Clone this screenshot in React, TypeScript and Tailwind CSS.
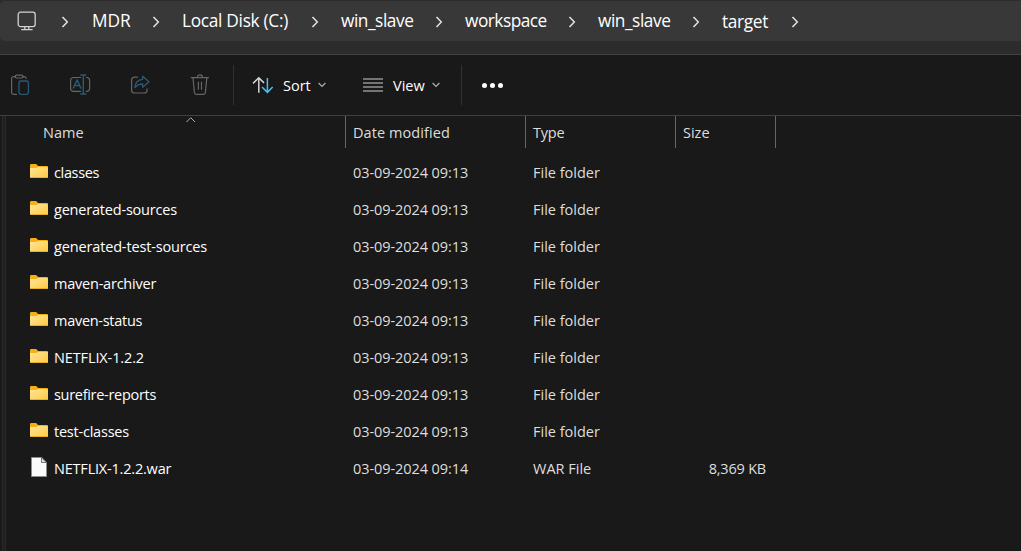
import type { ReactNode } from "react";

const crumbs = [
  { name: "MDR", cls: "w-[90px]" },
  { name: "Local Disk (C:)", cls: "w-[159px] tracking-[-0.3px]" },
  { name: "win_slave", cls: "w-[124px] tracking-[-0.45px]" },
  { name: "workspace", cls: "w-[133px] tracking-[-0.5px]" },
  { name: "win_slave", cls: "w-[124px] tracking-[-0.45px]" },
  { name: "target", cls: "w-[98px] tracking-[-0.35px] pt-px" },
];

const files = [
  { name: "classes", cls: "tracking-[-0.35px]" },
  { name: "generated-sources", cls: "tracking-[-0.2px]" },
  { name: "generated-test-sources", cls: "tracking-[-0.15px]" },
  { name: "maven-archiver", cls: "tracking-[-0.22px]" },
  { name: "maven-status", cls: "tracking-[-0.28px]" },
  { name: "NETFLIX-1.2.2", cls: "tracking-[-0.12px]" },
  { name: "surefire-reports", cls: "tracking-[-0.3px]" },
  { name: "test-classes", cls: "tracking-[-0.22px]" },
  { name: "NETFLIX-1.2.2.war", cls: "tracking-[-0.2px]", file: true },
];

function Chevron() {
  return (
    <svg width="8" height="12" viewBox="0 0 8 12" className="mt-px shrink-0" fill="none" stroke="#e2e2e2" strokeWidth="1.5">
      <path d="M1.5 1l4.8 5-4.8 5" />
    </svg>
  );
}

function MonitorIcon() {
  return (
    <svg width="20" height="20" viewBox="0 0 20 20" className="shrink-0" fill="none" stroke="#d2d2d2" strokeWidth="1.3">
      <rect x="1.2" y="1.2" width="17" height="14.4" rx="2.4" />
      <path d="M7.8 15.6v2.8M11.8 15.6v2.8M4.2 18.6h11.4" />
    </svg>
  );
}

function ToolIcon({ children }: { children: ReactNode }) {
  return (
    <svg width="22" height="22" viewBox="0 0 22 22" className="shrink-0" fill="none" stroke="#666666" strokeWidth="1.2" strokeLinecap="round" strokeLinejoin="round">
      {children}
    </svg>
  );
}

function PasteIcon() {
  return (
    <ToolIcon>
      <path d="M6.5 20.4H3.6a2 2 0 0 1-2-2V4.6a2 2 0 0 1 2-2h1.6M13 2.6h1.2a2 2 0 0 1 1.9 2" />
      <rect x="5.2" y="1.2" width="7.8" height="2.8" rx="1.4" />
      <rect x="9" y="7" width="9.4" height="13.4" rx="1.8" stroke="#2b5a76" strokeWidth="1.3" />
    </ToolIcon>
  );
}

function RenameIcon() {
  return (
    <ToolIcon>
      <path d="M10.6 3.5H3.4A2.8 2.8 0 0 0 .6 6.3v8.2a2.8 2.8 0 0 0 2.8 2.8h7.2M16.2 3.5h.6a2.8 2.8 0 0 1 2.8 2.8v8.2a2.8 2.8 0 0 1-2.8 2.8h-.6" />
      <path d="M3.4 14.1l3.7-8.3 3.7 8.3M4.6 11.5h5M10.8 1h5M13.3 1v19M10.8 20h5" stroke="#2b5a76" strokeWidth="1.4" />
    </ToolIcon>
  );
}

function ShareIcon() {
  return (
    <ToolIcon>
      <path d="M7.4 3.2H4.4a2.8 2.8 0 0 0-2.8 2.8v10.2A2.8 2.8 0 0 0 4.4 19h9.8a2.8 2.8 0 0 0 2.8-2.8v-1.4" />
      <path d="M12.6 2.2l6.4 5.6-6.4 5.4V10c-3.5 0-5.7 1.1-7.7 3.6.3-4.4 2.6-7.8 7.7-8.3z" stroke="#2b5a76" strokeWidth="1.3" />
    </ToolIcon>
  );
}

function TrashIcon() {
  return (
    <ToolIcon>
      <path d="M1.3 3.6h17.2M7.3 3.4a2.6 2.6 0 0 1 5.2 0M3 3.9l1.4 14.6a1.9 1.9 0 0 0 1.9 1.8h7.2a1.9 1.9 0 0 0 1.9-1.8l1.4-14.6M8.4 8v7.2M11.5 8v7.2" />
    </ToolIcon>
  );
}

function Caret() {
  return (
    <svg width="8" height="6" viewBox="0 0 8 6" className="shrink-0" fill="none" stroke="#b0b0b0" strokeWidth="1.2">
      <path d="M.6 1l3.4 3.5L7.4 1" />
    </svg>
  );
}

function FolderIcon() {
  return (
    <svg width="18" height="14" viewBox="0 0 18 14" className="shrink-0">
      <defs>
        <linearGradient id="folder-front" x1="0" y1="0" x2="1" y2="1">
          <stop offset="0" stopColor="#ffe59c" />
          <stop offset="1" stopColor="#ffca3e" />
        </linearGradient>
      </defs>
      <path d="M0 1.2Q0 0 1.2 0H5.6Q6.3 0 6.8.6L8 2H17Q18 2 18 3V8H0z" fill="#f9ae12" />
      <path d="M0 4.1H6L8.2 3H17Q18 3 18 4V13Q18 14 17 14H1Q0 14 0 13z" fill="url(#folder-front)" />
      <path d="M.3 13.5h17.4" stroke="#e9ac26" strokeWidth=".9" />
    </svg>
  );
}

function FileIcon() {
  return (
    <svg width="16" height="20" viewBox="0 0 16 20" className="ml-px mr-px shrink-0">
      <path d="M.5.5h10.2l4.8 4.8v14.2H.5z" fill="#fafafa" stroke="#8c8c8c" />
      <path d="M10.5.5v5h5z" fill="#dedede" stroke="#777777" />
    </svg>
  );
}

export default function App() {
  return (
    <div className="flex h-[551px] w-[1021px] flex-col overflow-hidden bg-[#191919] font-['Open_Sans','Noto_Sans',sans-serif] text-[14.5px] text-white">
      <header className="h-[55px] shrink-0 border-b border-[#414141] bg-[#2c2c2c] pt-px">
        <nav className="flex h-10 items-center rounded-l-[5px] bg-[#383838] pl-[17px] text-[17.3px] leading-6">
          <MonitorIcon />
          <div className="ml-6 flex items-center">
            <Chevron />
          </div>
          <div className="ml-[23px] flex items-center">
            {crumbs.map((c, i) => (
              <div key={i} className={`flex items-center justify-between whitespace-nowrap ${c.cls}`}>
                <span>{c.name}</span>
                <span className={i < crumbs.length - 1 ? "mr-[22px]" : "mr-[21px]"}>
                  <Chevron />
                </span>
              </div>
            ))}
          </div>
        </nav>
      </header>

      <div className="flex h-[61px] shrink-0 items-center border-b border-[#414141] pl-[10px]">
        <div className="flex w-[223px] items-center gap-[38px]">
          <PasteIcon />
          <RenameIcon />
          <ShareIcon />
          <TrashIcon />
        </div>
        <div className="h-10 w-px bg-[#303030]" />
        <button className="ml-[18px] flex items-center">
          <svg width="22" height="18" viewBox="0 0 22 18" fill="none" strokeWidth="1.5">
            <path d="M6.8 16.8V1.8M1 7.4l5.8-5.7 5.2 5.2" stroke="#d5d5d5" />
            <path d="M15.4 2v14.5M10 11l5.4 5.4 5.3-5.4" stroke="#4cbcf4" />
          </svg>
          <span className="ml-[9px] w-[35px] pt-[2px] text-left">Sort</span>
          <Caret />
        </button>
        <button className="ml-[37px] flex items-center">
          <svg width="20" height="14" viewBox="0 0 20 14" stroke="#d0d0d0" strokeWidth="1.2">
            <path d="M0 1h20M0 5h20M0 9h20M0 13h20" />
          </svg>
          <span className="ml-[10px] w-[39px] pt-[2px] text-left">View</span>
          <Caret />
        </button>
        <div className="ml-[21px] h-10 w-px bg-[#303030]" />
        <div className="ml-[20px] flex gap-[3px]">
          <i className="size-[5px] rounded-full bg-white" />
          <i className="size-[5px] rounded-full bg-white" />
          <i className="size-[5px] rounded-full bg-white" />
        </div>
      </div>

      <div className="flex min-h-0 flex-1">
        <div className="ml-[2px] w-1 shrink-0 border-x border-[#292929] bg-[#202020]" />
        <main className="flex-1">
          <div className="flex h-8 items-center text-[#dedede]">
            <div className="flex h-8 w-[340px] border-r border-[#666666] pl-[37px]">
              <span className="w-[143px] pt-px leading-8">Name</span>
              <svg width="10" height="6" viewBox="0 0 10 6" className="mt-px" fill="none" stroke="#b0b0b0">
                <path d="M.5 5L4.7.7 9 5" />
              </svg>
            </div>
            <div className="h-8 w-[180px] border-r border-[#666666] pt-px pl-[7px] leading-8 tracking-[0.08px]">Date modified</div>
            <div className="h-8 w-[150px] border-r border-[#666666] pt-px pl-[7px] leading-8 tracking-[-0.2px]">Type</div>
            <div className="h-8 w-[100px] border-r border-[#666666] pt-px pl-[7px] leading-8">Size</div>
          </div>
          <div className="pt-[6px]">
            {files.map((f) => (
              <div key={f.name} className="flex h-[37px] items-center whitespace-nowrap text-[#dedede]">
                <div className="flex w-[347px] items-center pl-6">
                  <span className="-mt-[3px]">{f.file ? <FileIcon /> : <FolderIcon />}</span>
                  <span className={`ml-[6px] text-white ${f.cls}`}>{f.name}</span>
                </div>
                <div className="w-[180px] tracking-[-0.08px]">{f.file ? "03-09-2024 09:14" : "03-09-2024 09:13"}</div>
                <div className="w-[150px]">{f.file ? "WAR File" : "File folder"}</div>
                <div className="w-[83px] text-right tracking-[-0.2px]">{f.file ? "8,369 KB" : ""}</div>
              </div>
            ))}
          </div>
        </main>
      </div>
    </div>
  );
}
